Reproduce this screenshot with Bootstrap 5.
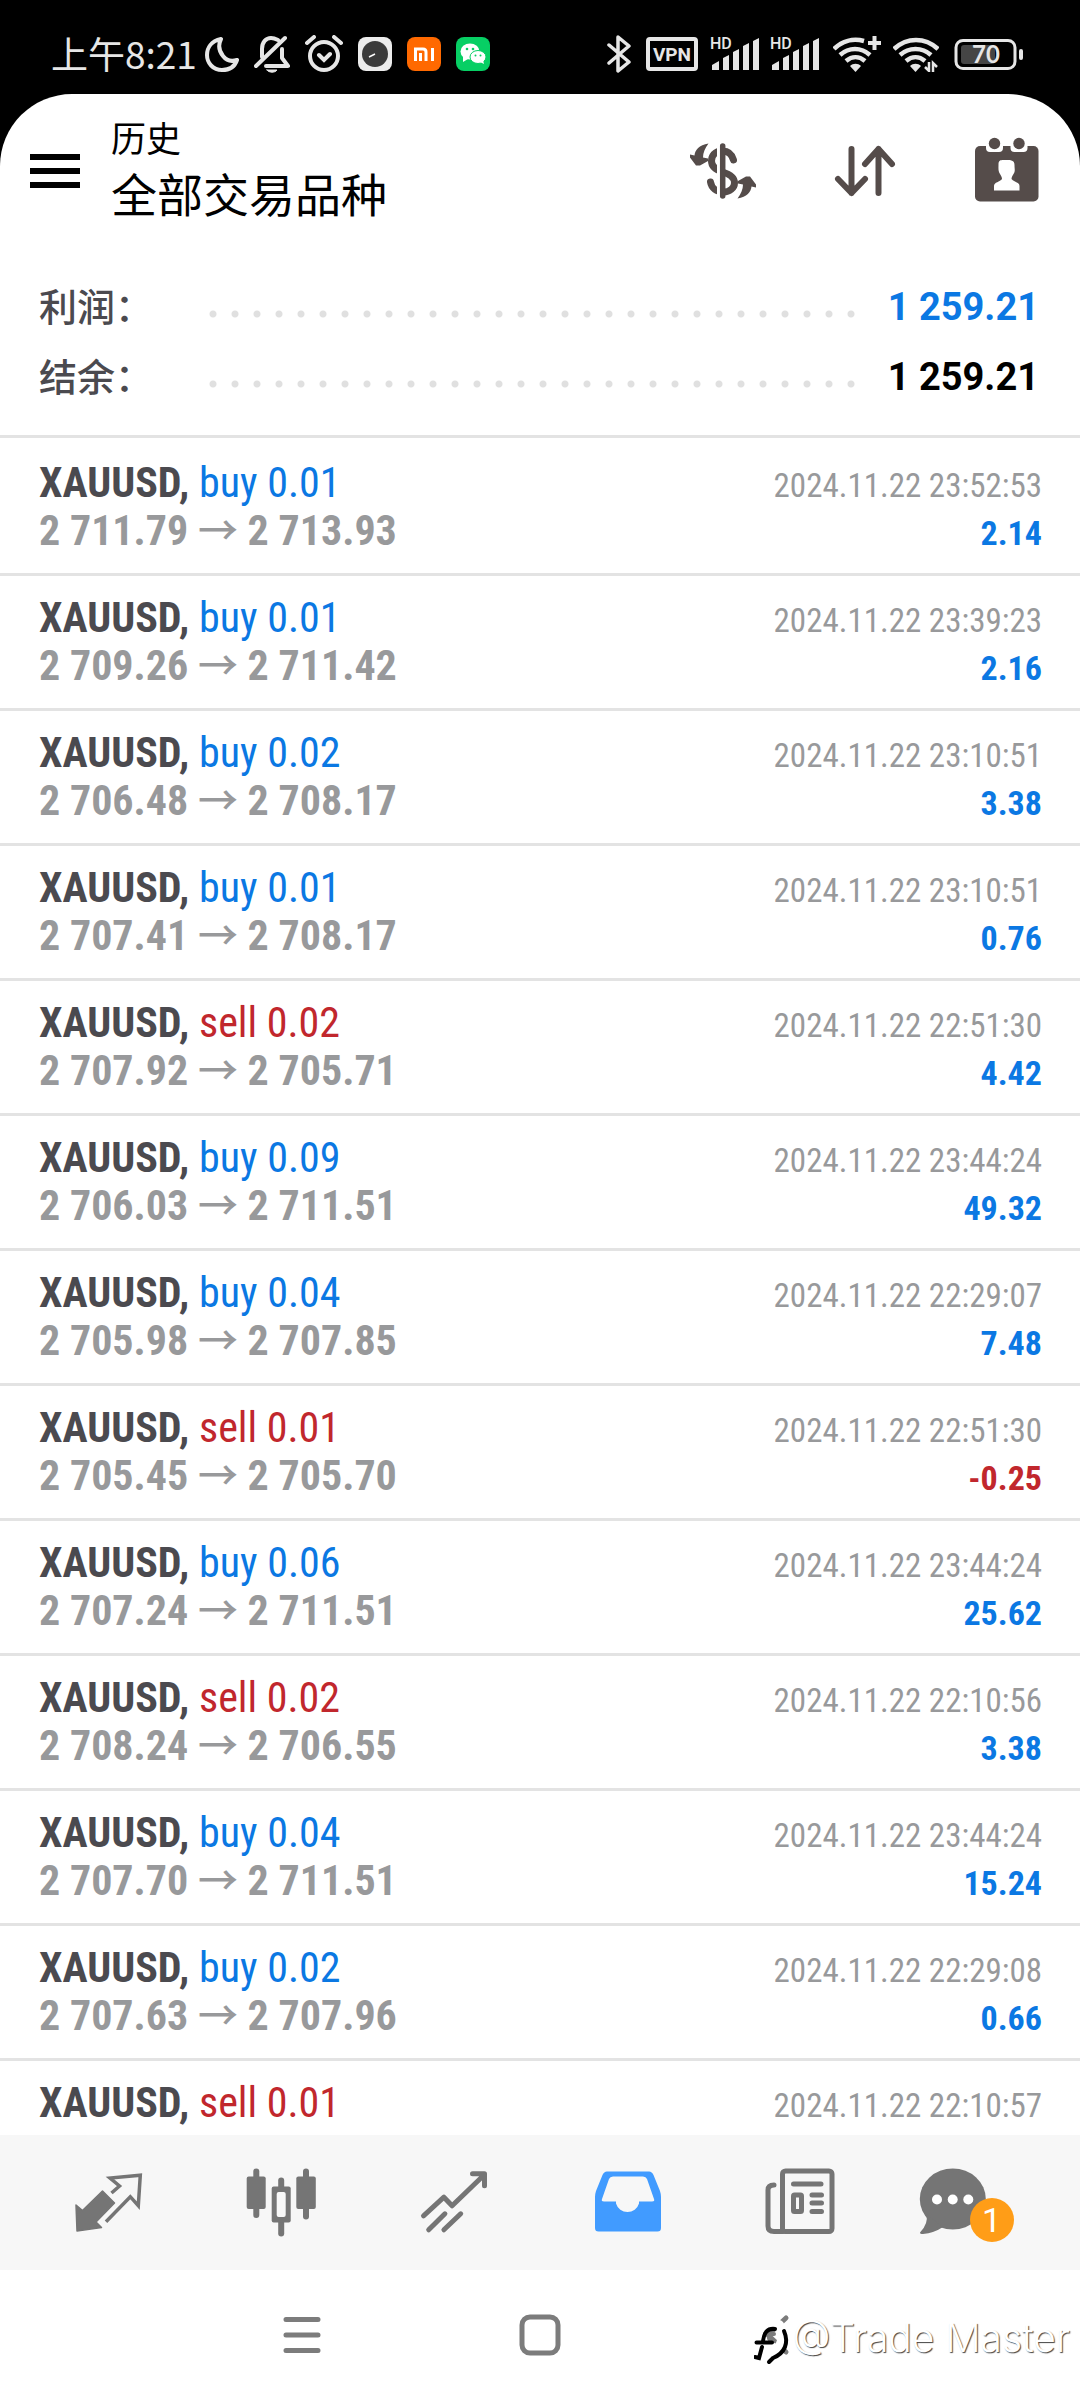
<!DOCTYPE html>
<html lang="zh-CN">
<head>
<meta charset="utf-8">
<meta name="viewport" content="width=device-width, initial-scale=1">
<title>历史 - 全部交易品种</title>
<link href="https://cdn.jsdelivr.net/npm/bootstrap@5.3.0/dist/css/bootstrap.min.css" rel="stylesheet">
<script src="https://cdn.jsdelivr.net/npm/bootstrap@5.3.0/dist/js/bootstrap.bundle.min.js"></script>
<style>
  body { font-family: Roboto, "Noto Sans CJK SC", sans-serif; }
  svg { display: block; flex: none; }
  .screen { height: 100vh; background: #000; }
  .status-bar { height: 94px; padding: 13px 56px 0 51px; color: #e6e6e6; }
  .status-time { width: 139px; padding-bottom: 2px; font-family: "Noto Sans CJK SC", sans-serif; font-size: 37px; line-height: 48px; }
  .status-left { gap: 15px; }
  .status-right { gap: 12px; }
  .app-sheet { background: #fff; border-radius: 72px 72px 0 0; min-height: 0; }
  .app-header { padding: 18px 37px 0 30px; }
  .header-titles { margin-left: 31px; padding-bottom: 4px; color: #000; font-family: "Noto Sans CJK SC", sans-serif; }
  .header-titles p { font-size: 35px; line-height: 50px; }
  .header-titles h1 { font-size: 46px; line-height: 60px; font-weight: 400; }
  .header-actions { gap: 70px; color: #554c4a; }
  .summary { padding: 46px 41px 23px 39px; border-bottom: 3px solid #e3e3e3; }
  .summary-line { height: 70px; }
  .summary dt { width: 163px; padding-bottom: 4px; font-family: "Noto Sans CJK SC", sans-serif; font-size: 38px; line-height: 56px; font-weight: 500; color: #4b4a4f; }
  .summary dd { font-size: 38px; font-weight: 700; color: #000; }
  .leader-dots { height: 8px; margin: 14px 26px 0 0; background: radial-gradient(circle at center, #e0e0e0 3px, transparent 4px) 0 0 / 22px 8px round; }
  .trades { min-height: 0; font-family: "Roboto Condensed", Roboto, sans-serif; }
  .trade { padding: 18px 38px 18px 39px; border-bottom: 3px solid #e3e3e3; }
  .trade:first-child { padding-top: 21px; }
  .trade-line { font-size: 42px; line-height: 48px; height: 48px; white-space: nowrap; }
  .symbol { font-weight: 700; color: #4b4a4f; }
  .prices { font-weight: 700; color: #98999b; }
  .arrow-glyph { font-family: "Noto Sans CJK SC", sans-serif; font-size: 40px; font-weight: 500; line-height: 1; }
  .trade-time { font-size: 33px; color: #98999b; }
  .profit { font-size: 34px; font-weight: 700; }
  .c-buy { color: #0b78e3 !important; }
  .c-sell { color: #c1272d !important; }
  .tab-bar { height: 135px; padding: 0 21px; background: #f7f7f7; }
  .tab-bar a { color: #757575; flex: 1 1 0; }
  .tab-bar a.active { color: #419bff; }
  .count-badge { left: 51px; top: 31px; width: 44px; height: 44px; border-radius: 50%; background: #ff9d17; color: #fff; font-size: 34px; line-height: 44px; text-align: center; }
  .system-nav { height: 130px; padding: 0 17%; background: #fff; }
  .system-nav button { flex: 1 1 0; height: 100%; }
  .watermark { right: 10px; bottom: 34px; gap: 2px; color: #fff; font-family: Inter, sans-serif; font-weight: 300; font-size: 39px; line-height: 56px; text-shadow: 1px 1px 1px #444; }
</style>
</head>
<body>
<div class="screen position-relative d-flex flex-column overflow-hidden">

  <div class="status-bar flex-shrink-0 d-flex justify-content-between align-items-center">
    <div class="status-left d-flex align-items-center">
      <span class="status-time text-nowrap">上午8:21</span>
      <svg width="34" height="36" viewBox="0 0 34 36" fill="none" stroke="#e6e6e6" stroke-width="4" stroke-linejoin="round"><path d="M16 3C6 5 2 12 2 19c0 8 6 15 15 15 8 0 13-4 15-10-6 2-11 0-14-4-4-5-5-11-2-17Z"/></svg>
      <svg width="36" height="38" viewBox="0 0 36 38" fill="none" stroke="#e6e6e6" stroke-width="4" stroke-linecap="round" stroke-linejoin="round"><path d="M2 31 31 3M8 22v-8C8 7 12 3 17 3c3 0 5 1 7 2M28 14v9l6 8H12"/><path d="M13 35h10c-2 3-8 3-10 0Z" fill="#e6e6e6" stroke-width="1"/></svg>
      <svg width="38" height="38" viewBox="0 0 38 38" fill="none" stroke="#e6e6e6" stroke-width="4" stroke-linecap="round"><circle cx="19" cy="21" r="14"/><path d="m14 20 5 5 6-6M2 8l7-6M36 8l-7-6"/></svg>
      <svg width="34" height="34" viewBox="0 0 34 34"><rect width="34" height="34" rx="8" fill="#ececec"/><circle cx="17" cy="17" r="13" fill="#3b3b3b"/><path d="m11 20 6-3" stroke="#fff" stroke-width="1.5"/></svg>
      <svg width="34" height="34" viewBox="0 0 34 34"><rect width="34" height="34" rx="8" fill="#ff6900"/><path d="M8.500 24V12h7.500q3 0 3 3v9M13.500 16v8M25.500 11v13" fill="none" stroke="#fff" stroke-width="3"/></svg>
      <svg width="34" height="34" viewBox="0 0 34 34"><rect width="34" height="34" rx="8" fill="#07cf64"/><ellipse cx="14" cy="14.500" rx="9.500" ry="8" fill="#fff"/><path d="m7 19 0 6 5-3Z" fill="#fff"/><ellipse cx="22" cy="20" rx="8" ry="6.500" fill="#fff" stroke="#07cf64"/><path d="m24 25 4 2-1-4Z" fill="#fff"/><g fill="#07cf64"><circle cx="11" cy="12" r="1.300"/><circle cx="17" cy="12" r="1.300"/><circle cx="19.500" cy="18.500" r="1"/><circle cx="24.500" cy="18.500" r="1"/></g></svg>
    </div>
    <div class="status-right d-flex align-items-center">
      <svg width="27" height="38" viewBox="0 0 27 38" fill="none" stroke="#e6e6e6" stroke-width="3.500" stroke-linejoin="round" stroke-linecap="round"><path d="M2 10 22 27 11 36V2l11 9L2 28"/></svg>
      <svg width="52" height="34" viewBox="0 0 52 34"><rect x="2" y="2" width="48" height="30" rx="2" fill="none" stroke="#e6e6e6" stroke-width="4"/><text x="26" y="24" text-anchor="middle" font-family="Roboto" font-weight="700" font-size="19" fill="#e6e6e6">VPN</text></svg>
      <svg width="111" height="44" viewBox="0 -5 111 44" fill="#e6e6e6"><text x="0" y="12" font-family="Roboto" font-weight="500" font-size="16">HD</text><text x="60" y="12" font-family="Roboto" font-weight="500" font-size="16">HD</text><path d="M2 33v-5l7-4v9ZM13 33V21l6-3v15ZM23 33V15l6-3v21ZM33 33V9l6-3v27ZM43 33V4l6-3v32Z"/><path d="M62 33v-5l7-4v9ZM73 33V21l6-3v15ZM83 33V15l6-3v21ZM93 33V9l6-3v27ZM103 33V4l6-3v32Z"/></svg>
      <svg width="48" height="36" viewBox="0 0 48 36" fill="none" stroke="#e6e6e6" stroke-width="4.500"><path d="M1 13C9 5 20 2 31 5M7 19c9-8 21-8 30 0M13 25c6-5 13-5 19 0"/><path d="M35 7h13M41.500 0v14" stroke-width="4"/><path d="m17 30c3-3 8-3 11 0l-5.500 6Z" fill="#e6e6e6" stroke="none"/></svg>
      <svg width="46" height="36" viewBox="0 0 46 36" fill="none" stroke="#e6e6e6" stroke-width="4.500"><path d="M1 13c13-12 31-12 44 0M7 19c9-8 22-8 31 0M13 25c6-5 13-5 19 0"/><path d="m17 30c3-3 8-3 11 0l-5.500 6Z" fill="#e6e6e6" stroke="none"/><path d="M36 26v9l-4-4M40 36v-9l4 4" stroke-width="2.500"/></svg>
      <svg width="73" height="34" viewBox="0 0 73 34"><rect x="5" y="3.500" width="59" height="28" rx="7" fill="none" stroke="#e6e6e6" stroke-width="3"/><rect x="10" y="8" width="34" height="19" rx="3" fill="#454545"/><rect x="68" y="12" width="4" height="11" rx="2" fill="#e6e6e6"/><text x="35" y="26" text-anchor="middle" font-family="Lato" font-weight="700" font-size="24" fill="#e6e6e6">70</text></svg>
    </div>
  </div>

  <main class="app-sheet flex-grow-1 d-flex flex-column overflow-hidden">
    <header class="app-header flex-shrink-0 d-flex align-items-center">
      <button type="button" class="btn p-0 border-0 rounded-0" aria-label="菜单">
        <svg width="50" height="40" viewBox="0 0 50 40" stroke="#000" stroke-width="6"><path d="M0 8h50M0 22h50M0 36h50"/></svg>
      </button>
      <div class="header-titles">
        <p class="mb-0">历史</p>
        <h1 class="mb-0">全部交易品种</h1>
      </div>
      <div class="header-actions d-flex ms-auto">
        <button type="button" class="btn p-0 border-0" aria-label="货币">
          <svg width="72" height="72" viewBox="0 0 72 72" fill="none" stroke="#554c4a"><path d="M46.500 27c-2-7-6-9-11-9-8 0-11 5-11 10 0 6 5 9 11 11 7 2 12 5 12 11 0 5-5 9-11 9-7 0-12-4-13-10" stroke-width="7" stroke-linecap="round"/><path d="M31.500 12v52" stroke="#fff" stroke-width="3"/><path d="M35.700 13v50" stroke-width="5.500" stroke-linecap="round"/><g fill="#554c4a" stroke="none"><path d="M21.500 10.500C12 12 8 17 7.500 22.500L3 21.500v3l6 8h4l8-4.500v-2.500l-5-1c0-5 2-9 5.500-14Z"/><path d="M21.500 10.500C12 12 8 17 7.500 22.500L3 21.500v3l6 8h4l8-4.500v-2.500l-5-1c0-5 2-9 5.500-14Z" transform="rotate(180 36 38)"/></g></svg>
        </button>
        <button type="button" class="btn p-0 border-0" aria-label="排序">
          <svg width="72" height="72" viewBox="0 0 72 72" fill="none" stroke="#554c4a" stroke-width="6" stroke-linecap="round" stroke-linejoin="round"><path d="M22.500 16v44M9 46l13.500 14L36 46M49.500 60V16M36 31l13.500-15L63 31"/></svg>
        </button>
        <button type="button" class="btn p-0 border-0" aria-label="日期">
          <svg width="72" height="72" viewBox="0 0 72 72"><rect x="4" y="13" width="63.500" height="55.500" rx="5" fill="#554c4a"/><path d="M15 12h17v3q0 4-4 4h-9q-4 0-4-4ZM39.500 12h17v3q0 4-4 4h-9q-4 0-4-4Z" fill="#fff"/><circle cx="23.500" cy="10.500" r="5.700" fill="#554c4a"/><circle cx="48" cy="10.500" r="5.700" fill="#554c4a"/><path d="M27.500 31c0-5 4-4 8-4s8 0 8 5c0 4 1 6-1 9-1 2-2 3-2 5 2 3 8 3 8 7v4.500H23V53c0-4 6-4 8-7 0-2-1-3-2-5-2-3-1.500-6-1.500-10Z" fill="#fff"/></svg>
        </button>
      </div>
    </header>

    <dl class="summary flex-shrink-0 mb-0">
      <div class="summary-line d-flex align-items-center"><dt>利润：</dt><span class="leader-dots flex-grow-1"></span><dd class="mb-0 c-buy">1 259.21</dd></div>
      <div class="summary-line d-flex align-items-center"><dt>结余：</dt><span class="leader-dots flex-grow-1"></span><dd class="mb-0">1 259.21</dd></div>
    </dl>

    <ul class="trades list-unstyled mb-0 flex-grow-1 overflow-hidden">
      <li class="trade">
        <div class="trade-line d-flex justify-content-between align-items-baseline"><span><span class="symbol">XAUUSD,</span> <span class="c-buy">buy 0.01</span></span><time class="trade-time">2024.11.22 23:52:53</time></div>
        <div class="trade-line d-flex justify-content-between align-items-baseline"><span class="prices">2 711.79 <span class="arrow-glyph">→</span> 2 713.93</span><span class="profit c-buy">2.14</span></div>
      </li>
      <li class="trade">
        <div class="trade-line d-flex justify-content-between align-items-baseline"><span><span class="symbol">XAUUSD,</span> <span class="c-buy">buy 0.01</span></span><time class="trade-time">2024.11.22 23:39:23</time></div>
        <div class="trade-line d-flex justify-content-between align-items-baseline"><span class="prices">2 709.26 <span class="arrow-glyph">→</span> 2 711.42</span><span class="profit c-buy">2.16</span></div>
      </li>
      <li class="trade">
        <div class="trade-line d-flex justify-content-between align-items-baseline"><span><span class="symbol">XAUUSD,</span> <span class="c-buy">buy 0.02</span></span><time class="trade-time">2024.11.22 23:10:51</time></div>
        <div class="trade-line d-flex justify-content-between align-items-baseline"><span class="prices">2 706.48 <span class="arrow-glyph">→</span> 2 708.17</span><span class="profit c-buy">3.38</span></div>
      </li>
      <li class="trade">
        <div class="trade-line d-flex justify-content-between align-items-baseline"><span><span class="symbol">XAUUSD,</span> <span class="c-buy">buy 0.01</span></span><time class="trade-time">2024.11.22 23:10:51</time></div>
        <div class="trade-line d-flex justify-content-between align-items-baseline"><span class="prices">2 707.41 <span class="arrow-glyph">→</span> 2 708.17</span><span class="profit c-buy">0.76</span></div>
      </li>
      <li class="trade">
        <div class="trade-line d-flex justify-content-between align-items-baseline"><span><span class="symbol">XAUUSD,</span> <span class="c-sell">sell 0.02</span></span><time class="trade-time">2024.11.22 22:51:30</time></div>
        <div class="trade-line d-flex justify-content-between align-items-baseline"><span class="prices">2 707.92 <span class="arrow-glyph">→</span> 2 705.71</span><span class="profit c-buy">4.42</span></div>
      </li>
      <li class="trade">
        <div class="trade-line d-flex justify-content-between align-items-baseline"><span><span class="symbol">XAUUSD,</span> <span class="c-buy">buy 0.09</span></span><time class="trade-time">2024.11.22 23:44:24</time></div>
        <div class="trade-line d-flex justify-content-between align-items-baseline"><span class="prices">2 706.03 <span class="arrow-glyph">→</span> 2 711.51</span><span class="profit c-buy">49.32</span></div>
      </li>
      <li class="trade">
        <div class="trade-line d-flex justify-content-between align-items-baseline"><span><span class="symbol">XAUUSD,</span> <span class="c-buy">buy 0.04</span></span><time class="trade-time">2024.11.22 22:29:07</time></div>
        <div class="trade-line d-flex justify-content-between align-items-baseline"><span class="prices">2 705.98 <span class="arrow-glyph">→</span> 2 707.85</span><span class="profit c-buy">7.48</span></div>
      </li>
      <li class="trade">
        <div class="trade-line d-flex justify-content-between align-items-baseline"><span><span class="symbol">XAUUSD,</span> <span class="c-sell">sell 0.01</span></span><time class="trade-time">2024.11.22 22:51:30</time></div>
        <div class="trade-line d-flex justify-content-between align-items-baseline"><span class="prices">2 705.45 <span class="arrow-glyph">→</span> 2 705.70</span><span class="profit c-sell">-0.25</span></div>
      </li>
      <li class="trade">
        <div class="trade-line d-flex justify-content-between align-items-baseline"><span><span class="symbol">XAUUSD,</span> <span class="c-buy">buy 0.06</span></span><time class="trade-time">2024.11.22 23:44:24</time></div>
        <div class="trade-line d-flex justify-content-between align-items-baseline"><span class="prices">2 707.24 <span class="arrow-glyph">→</span> 2 711.51</span><span class="profit c-buy">25.62</span></div>
      </li>
      <li class="trade">
        <div class="trade-line d-flex justify-content-between align-items-baseline"><span><span class="symbol">XAUUSD,</span> <span class="c-sell">sell 0.02</span></span><time class="trade-time">2024.11.22 22:10:56</time></div>
        <div class="trade-line d-flex justify-content-between align-items-baseline"><span class="prices">2 708.24 <span class="arrow-glyph">→</span> 2 706.55</span><span class="profit c-buy">3.38</span></div>
      </li>
      <li class="trade">
        <div class="trade-line d-flex justify-content-between align-items-baseline"><span><span class="symbol">XAUUSD,</span> <span class="c-buy">buy 0.04</span></span><time class="trade-time">2024.11.22 23:44:24</time></div>
        <div class="trade-line d-flex justify-content-between align-items-baseline"><span class="prices">2 707.70 <span class="arrow-glyph">→</span> 2 711.51</span><span class="profit c-buy">15.24</span></div>
      </li>
      <li class="trade">
        <div class="trade-line d-flex justify-content-between align-items-baseline"><span><span class="symbol">XAUUSD,</span> <span class="c-buy">buy 0.02</span></span><time class="trade-time">2024.11.22 22:29:08</time></div>
        <div class="trade-line d-flex justify-content-between align-items-baseline"><span class="prices">2 707.63 <span class="arrow-glyph">→</span> 2 707.96</span><span class="profit c-buy">0.66</span></div>
      </li>
      <li class="trade">
        <div class="trade-line d-flex justify-content-between align-items-baseline"><span><span class="symbol">XAUUSD,</span> <span class="c-sell">sell 0.01</span></span><time class="trade-time">2024.11.22 22:10:57</time></div>
        <div class="trade-line d-flex justify-content-between align-items-baseline"><span class="prices">2 707.20 <span class="arrow-glyph">→</span> 2 706.55</span><span class="profit c-buy">0.65</span></div>
      </li>
    </ul>
  </main>

  <nav class="tab-bar flex-shrink-0 d-flex align-items-stretch">
    <a href="#quotes" class="d-flex align-items-center justify-content-center" aria-label="行情">
      <svg width="72" height="72" viewBox="0 0 72 72"><path d="m4 38 6.500 5.500 20-19.500 12 12-18.500 19 5.500 5.500L5 64Z" fill="#757575" stroke="#757575" stroke-width="1.500" stroke-linejoin="round"/><path d="m39.500 26 8-7-9.500-8 30.300-2.800-2 30.500-8-9-24.300 25" fill="none" stroke="#757575" stroke-width="3.500"/></svg>
    </a>
    <a href="#charts" class="d-flex align-items-center justify-content-center" aria-label="图表">
      <svg width="72" height="72" viewBox="0 0 72 72" fill="#757575"><rect x="1.700" y="9.500" width="19" height="32.500" rx="2"/><rect x="8.300" y="1.500" width="6" height="49.500" rx="3"/><rect x="33.200" y="10.500" width="6" height="59" rx="3"/><rect x="26.700" y="19.500" width="19" height="36" rx="2"/><rect x="31.700" y="25" width="9" height="25" rx="2" fill="#f7f7f7"/><rect x="51.300" y="9.500" width="19.500" height="32.500" rx="2"/><rect x="58" y="1.500" width="6" height="51" rx="3"/></svg>
    </a>
    <a href="#trade" class="d-flex align-items-center justify-content-center" aria-label="交易">
      <svg width="72" height="72" viewBox="0 0 72 72" fill="none" stroke="#757575" stroke-width="5" stroke-linecap="round" stroke-linejoin="round"><path d="m5.500 48.800 20.400-18.600 8.200 8.600L65 9M54.500 6.800h12v12M10.700 62.800l16.200-16M25.900 62.800l16.800-16"/></svg>
    </a>
    <a href="#history" class="active d-flex align-items-center justify-content-center" aria-label="历史" aria-current="page">
      <svg width="72" height="72" viewBox="0 0 72 72" fill="#419bff" fill-rule="evenodd"><path d="M16 4.500h42q3 0 4.500 3.500L69 24q1 3 1 6v31q0 3.500-3.500 3.500h-59Q4 64.500 4 61V30q0-3 1-6l6.500-16Q13 4.500 16 4.500ZM22 9.500q-3 0-4 2.500l-7 20q-1 2.500 2 2.500h12v2a12 12 0 0 0 23 0v-2h13q3 0 2-2.500l-7-20q-1-2.500-4-2.500Z"/></svg>
    </a>
    <a href="#news" class="d-flex align-items-center justify-content-center" aria-label="新闻">
      <svg width="72" height="72" viewBox="0 0 72 72" fill="none" stroke="#757575" stroke-width="5" stroke-linecap="round" stroke-linejoin="round"><rect x="18.500" y="4" width="49.500" height="60.500" rx="3"/><path d="M10 18q-6 0-6 5v36q0 5.500 6 5.500h9M29.500 17H57M48 28h9.500M48 36h9.500M48 44.500h9.500"/><rect x="29.500" y="28" width="8" height="16.500" rx="1"/></svg>
    </a>
    <a href="#mail" class="d-flex align-items-center justify-content-center text-decoration-none" aria-label="消息">
      <span class="position-relative d-block">
        <svg width="108" height="72" viewBox="0 0 108 72" fill="#757575"><ellipse cx="33.800" cy="32" rx="33" ry="30.500"/><path d="M7 47q3 9-6 18.500 0 2 3 1.500 11-1 20-7Z"/><g fill="#fff"><circle cx="18" cy="32.500" r="5"/><circle cx="33.700" cy="32.500" r="5"/><circle cx="49.300" cy="32.500" r="5"/></g></svg>
        <span class="count-badge position-absolute">1</span>
      </span>
    </a>
  </nav>

  <div class="system-nav flex-shrink-0 d-flex align-items-center">
    <button type="button" class="btn p-0 border-0 d-flex align-items-center justify-content-center" aria-label="最近任务"><svg width="42" height="42" viewBox="0 0 42 42" stroke="#7c7c7c" stroke-width="5" stroke-linecap="round"><path d="M5 5.500h32M5 21h32M5 36.500h32"/></svg></button>
    <button type="button" class="btn p-0 border-0 d-flex align-items-center justify-content-center" aria-label="主屏幕"><svg width="42" height="42" viewBox="0 0 42 42" fill="none" stroke="#7c7c7c" stroke-width="5"><rect x="3" y="3" width="36" height="36" rx="8"/></svg></button>
    <button type="button" class="btn p-0 border-0 d-flex align-items-center justify-content-center" aria-label="返回"><svg width="42" height="42" viewBox="0 0 42 42" fill="none" stroke="#7c7c7c" stroke-width="5" stroke-linecap="round"><path d="M29 4 11 21l18 17"/></svg></button>
  </div>

  <div class="watermark position-absolute d-flex align-items-center">
    <svg width="36" height="56" viewBox="0 0 36 56" fill="none" stroke-linecap="round"><path d="M25 15c6 8 5 24-10 32" stroke="#fff" stroke-width="10"/><path d="M20 16C11 16 8 21 7 29l-5 18M20 36c0 5-4 8-8 8" stroke="#fff" stroke-width="6"/><path d="M20 24c-6 0-7 6-1 7" stroke="#7c7c7c" stroke-width="4"/><path d="M21 19c-8-1-11 4-12 12M2.500 32.500H18M8 37 5 48l-4-1" stroke="#000" stroke-width="4"/><path d="M30 21c5 12 1 22-11 27l-4 4" stroke="#000" stroke-width="4"/></svg>
    <span>@Trade Master</span>
  </div>
</div>
</body>
</html>
